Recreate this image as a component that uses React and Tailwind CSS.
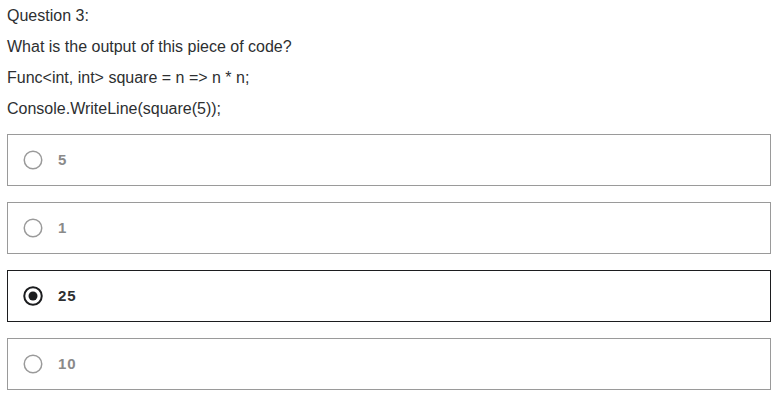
const options = [
  { id: 'a', label: '5' },
  { id: 'b', label: '1' },
  { id: 'c', label: '25', selected: true },
  { id: 'd', label: '10' },
];

function Radio({ selected }) {
  return (
    <svg width="20" height="20" viewBox="0 0 20 20" className="shrink-0">
      <circle cx="10" cy="10" r="8.75" fill="none" stroke={selected ? '#1c1d1f' : '#9a9a9a'} strokeWidth={selected ? 2 : 1.5} />
      {selected && <circle cx="10" cy="10" r="4.5" fill="#1c1d1f" />}
    </svg>
  );
}

export default function App() {
  return (
    <div className="bg-white min-h-[410px] px-[7px] text-[#2d2f31]" style={{ fontFamily: '"Liberation Sans", Arial, sans-serif' }}>
      <div className="text-[16px]">
        <p className="h-[31px] leading-[31px]">Question 3:</p>
        <p className="h-[31px] leading-[31px]">What is the output of this piece of code?</p>
        <p className="h-[31px] leading-[31px]">Func&lt;int, int&gt; square = n =&gt; n * n;</p>
        <p className="h-[31px] leading-[31px]">Console.WriteLine(square(5));</p>
      </div>
      <div className="mt-[10px] flex flex-col gap-[16px]">
        {options.map((o) => (
          <div
            key={o.id}
            className={`w-[764px] h-[52px] flex items-center gap-[15px] pl-[15px] border ${o.selected ? 'border-[#1c1d1f]' : 'border-[#9a9a9a]'}`}
          >
            <Radio selected={o.selected} />
            <span className={`text-[15px] tracking-[1px] font-bold ${o.selected ? 'text-[#2d2f31]' : 'text-[#8a8a8a]'}`}>{o.label}</span>
          </div>
        ))}
      </div>
    </div>
  );
}
